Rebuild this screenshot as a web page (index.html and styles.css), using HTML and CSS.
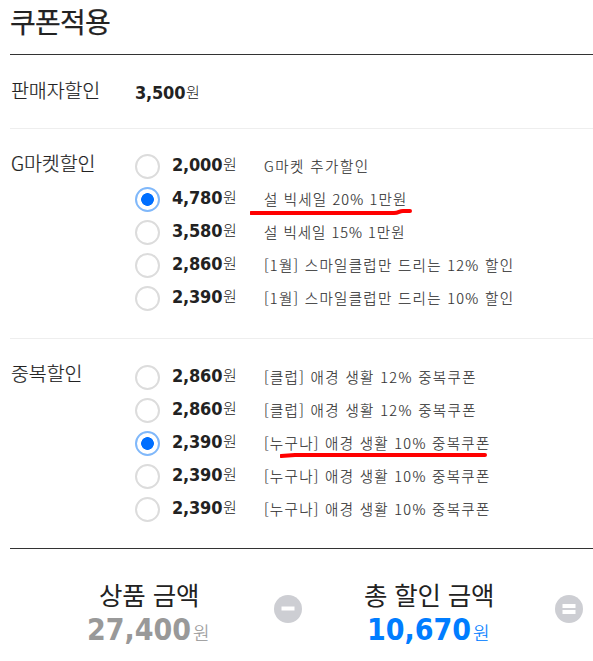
FILE: index.html
```
<!DOCTYPE html>
<html lang="ko">
<head>
<meta charset="utf-8">
<title>쿠폰적용</title>
<link rel="stylesheet" href="styles.css">
</head>
<body>
<main class="coupon">
  <h1 class="title">쿠폰적용</h1>
  <section class="group group-seller">
    <h2 class="label">판매자할인</h2>
    <p class="price"><b>3,500</b><span>원</span></p>
  </section>
  <section class="group">
    <h2 class="label">G마켓할인</h2>
    <ul class="options">
      <li class="option"><i class="radio"></i><p class="price"><b>2,000</b><span>원</span></p><p class="desc"><span class="d1">G마켓 추가할인</span></p></li>
      <li class="option"><i class="radio checked"></i><p class="price"><b>4,780</b><span>원</span></p><p class="desc"><span class="d2">설 빅세일 20% 1만원</span><svg class="mark mark-a" width="164" height="8" viewBox="0 0 164 8"><path d="M1 5H144C149 5 149 3 153 3H160"/></svg></p></li>
      <li class="option"><i class="radio"></i><p class="price"><b>3,580</b><span>원</span></p><p class="desc"><span class="d3">설 빅세일 15% 1만원</span></p></li>
      <li class="option"><i class="radio"></i><p class="price"><b>2,860</b><span>원</span></p><p class="desc"><span class="d4">[1월] 스마일클럽만 드리는 12% 할인</span></p></li>
      <li class="option"><i class="radio"></i><p class="price"><b>2,390</b><span>원</span></p><p class="desc"><span class="d4">[1월] 스마일클럽만 드리는 10% 할인</span></p></li>
    </ul>
  </section>
  <section class="group group-extra">
    <h2 class="label">중복할인</h2>
    <ul class="options">
      <li class="option"><i class="radio"></i><p class="price"><b>2,860</b><span>원</span></p><p class="desc"><span class="d5">[클럽] 애경 생활 12% 중복쿠폰</span></p></li>
      <li class="option"><i class="radio"></i><p class="price"><b>2,860</b><span>원</span></p><p class="desc"><span class="d5">[클럽] 애경 생활 12% 중복쿠폰</span></p></li>
      <li class="option"><i class="radio checked"></i><p class="price"><b>2,390</b><span>원</span></p><p class="desc"><span class="d6">[누구나] 애경 생활 10% 중복쿠폰</span><svg class="mark mark-b" width="208" height="8" viewBox="0 0 208 8"><path d="M1 5L15 4H205"/></svg></p></li>
      <li class="option"><i class="radio"></i><p class="price"><b>2,390</b><span>원</span></p><p class="desc"><span class="d6">[누구나] 애경 생활 10% 중복쿠폰</span></p></li>
      <li class="option"><i class="radio"></i><p class="price"><b>2,390</b><span>원</span></p><p class="desc"><span class="d6">[누구나] 애경 생활 10% 중복쿠폰</span></p></li>
    </ul>
  </section>
  <section class="summary">
    <div class="total">
      <h3 class="total-name">상품 금액</h3>
      <p class="amount"><b>27,400</b><span>원</span></p>
    </div>
    <svg class="sign" width="28" height="28" viewBox="0 0 28 28"><circle cx="14" cy="14" r="14"/><path d="M7.500 13.500H20.500"/></svg>
    <div class="total total-discount">
      <h3 class="total-name">총 할인 금액</h3>
      <p class="amount"><b>10,670</b><span>원</span></p>
    </div>
    <svg class="sign" width="28" height="28" viewBox="0 0 28 28"><circle cx="14" cy="14" r="14"/><path d="M7.500 11H20.500M7.500 17H20.500"/></svg>
  </section>
</main>
</body>
</html>
```
FILE: styles.css
```
* { box-sizing: border-box; margin: 0; padding: 0; }
body { background: #fff; color: #222; font-family: "Noto Sans CJK KR", sans-serif; overflow: hidden; }
.coupon { width: 583px; margin-left: 10px; }
.title { height: 54px; font-size: 28px; font-weight: 400; -webkit-text-stroke: 0.25px #222; line-height: 42px; letter-spacing: -0.8px; }
.group { display: grid; grid-template-columns: 125px 1fr; height: 210px; padding-top: 20px; border-top: 1px solid #eee; }
.group-seller { height: 74px; border-top-color: #333; }
.group-extra { padding-top: 21px; }
.label { margin-top: -1px; padding-left: 1px; font-size: 19.5px; font-weight: 300; -webkit-text-stroke: 0.2px #222; line-height: 30px; letter-spacing: -0.1px; white-space: nowrap; }
.group-seller .label { margin-top: 0; }
.group-extra .label { margin-top: -2px; }
.price { display: flex; height: 30px; padding-top: 1px; line-height: 30px; white-space: nowrap; }
.price b { width: 51px; font-family: "DejaVu Sans Condensed", "DejaVu Sans", sans-serif; font-stretch: condensed; font-size: 18px; letter-spacing: -0.2px; }
.price span { margin-top: -1px; font-size: 15px; font-weight: 300; }
.group-seller .price { padding-top: 3px; }
.options { list-style: none; }
.option { display: grid; grid-template-columns: 37px 92px 1fr; height: 33px; }
.radio { width: 25px; height: 25px; margin-top: 5px; border: 2px solid #dcdcdc; border-radius: 50%; }
.radio.checked { border-color: #80b8fa; background: radial-gradient(circle, #006fff 6px, #fff 6.7px); }
.desc { position: relative; padding-top: 2px; color: #333; font-size: 14.5px; font-weight: 300; -webkit-text-stroke: 0.15px #333; line-height: 30px; white-space: nowrap; letter-spacing: 1px; }
.d1 { letter-spacing: 1.45px; }
.d2 { letter-spacing: 1.15px; }
.d4, .d6 { letter-spacing: 1.3px; }
.d5 { letter-spacing: 1.35px; }
.mark { position: absolute; fill: none; stroke: #f00; stroke-width: 4; stroke-linecap: round; stroke-linejoin: round; }
.mark-a { left: -14px; top: 26px; }
.mark-b { left: 16px; top: 25px; }
.summary { display: grid; grid-template-columns: 264px 28px 253px 28px; align-items: start; height: 112px; border-top: 1px solid #333; }
.sign { margin-top: 46px; fill: #cdced3; stroke: #fff; stroke-width: 4; }
.sign circle { stroke: none; }
.total { padding-left: 77px; white-space: nowrap; }
.total-name { margin-top: 26px; padding-left: 12px; font-size: 25.5px; font-weight: 400; line-height: 38px; letter-spacing: -0.1px; }
.total-discount { padding-left: 65px; }
.total-discount .total-name { margin-left: -3px; padding-left: 0; letter-spacing: -0.2px; }
.amount { display: flex; color: #999; line-height: 34px; }
.amount b { width: 106px; font-family: "DejaVu Sans Condensed", "DejaVu Sans", sans-serif; font-stretch: condensed; font-size: 30px; }
.amount span { padding-top: 2px; font-size: 18px; font-weight: 300; -webkit-text-stroke: 0.2px; }
.total-discount .amount { color: #007dff; }
```
